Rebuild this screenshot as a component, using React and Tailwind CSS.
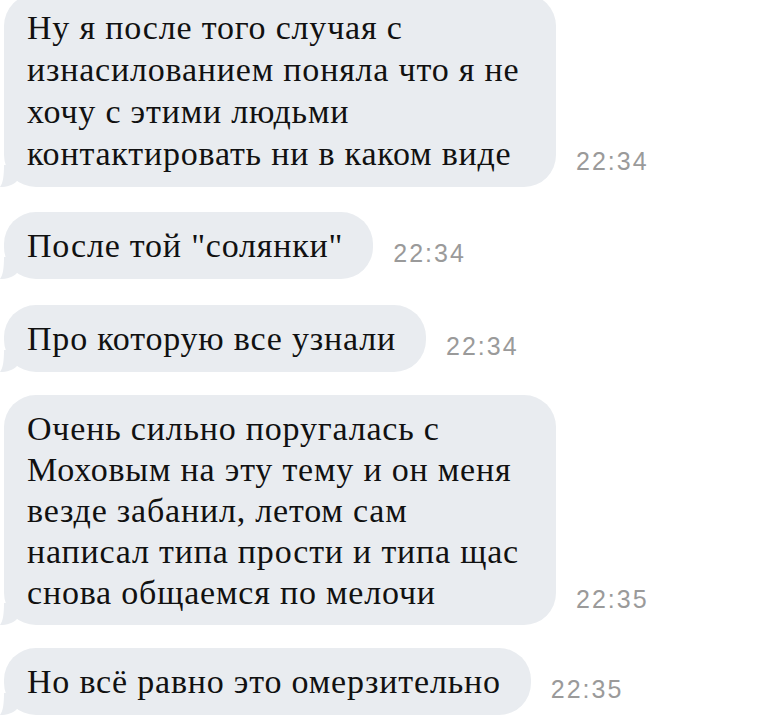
const messages = [
  {
    lines: [
      'Ну я после того случая с',
      'изнасилованием поняла что я не',
      'хочу с этими людьми',
      'контактировать ни в каком виде',
    ],
    time: '22:34',
    width: 'w-[552px]',
    margin: '-mt-[6px]',
    leading: 'leading-[42px]',
  },
  { lines: ['После той "солянки"'], time: '22:34', margin: 'mt-[25px]' },
  { lines: ['Про которую все узнали'], time: '22:34', margin: 'mt-[26px]' },
  {
    lines: [
      'Очень сильно поругалась с',
      'Моховым на эту тему и он меня',
      'везде забанил, летом сам',
      'написал типа прости и типа щас',
      'снова общаемся по мелочи',
    ],
    time: '22:35',
    width: 'w-[552px]',
    margin: 'mt-[23px]',
    leading: 'leading-[41px]',
  },
  { lines: ['Но всё равно это омерзительно'], time: '22:35', margin: 'mt-[23px]' },
]

function Tail() {
  return (
    <svg
      className="absolute bottom-0 left-[-4px]"
      width="22"
      height="22"
      viewBox="0 0 22 22"
    >
      <path d="M4 0 C4 11 3 18 0 22 C7 22 13 20 17 16 L17 0 Z" fill="#e9ecf0" />
    </svg>
  )
}

function Bubble({ msg }) {
  return (
    <div className={`flex items-end ${msg.margin}`}>
      <div
        className={`relative ml-[4px] rounded-[32px] bg-[#e9ecf0] py-[12.5px] pl-[23px] pr-[30px] ${msg.width || ''}`}
      >
        <Tail />
        <div
          className={`relative text-[34px] tracking-[0.8px] text-[#111111] whitespace-nowrap [font-family:'Liberation_Serif',serif] ${msg.leading || 'leading-[42px]'}`}
        >
          {msg.lines.map((line, i) => (
            <div key={i}>{line}</div>
          ))}
        </div>
      </div>
      <span className="ml-[20px] mb-[13px] text-[25px] leading-none tracking-[2px] text-[#9a9a9a] [font-family:'Liberation_Sans',sans-serif]">
        {msg.time}
      </span>
    </div>
  )
}

export default function App() {
  return (
    <div className="h-[725px] w-[760px] overflow-hidden bg-white">
      {messages.map((msg, i) => (
        <Bubble key={i} msg={msg} />
      ))}
    </div>
  )
}
